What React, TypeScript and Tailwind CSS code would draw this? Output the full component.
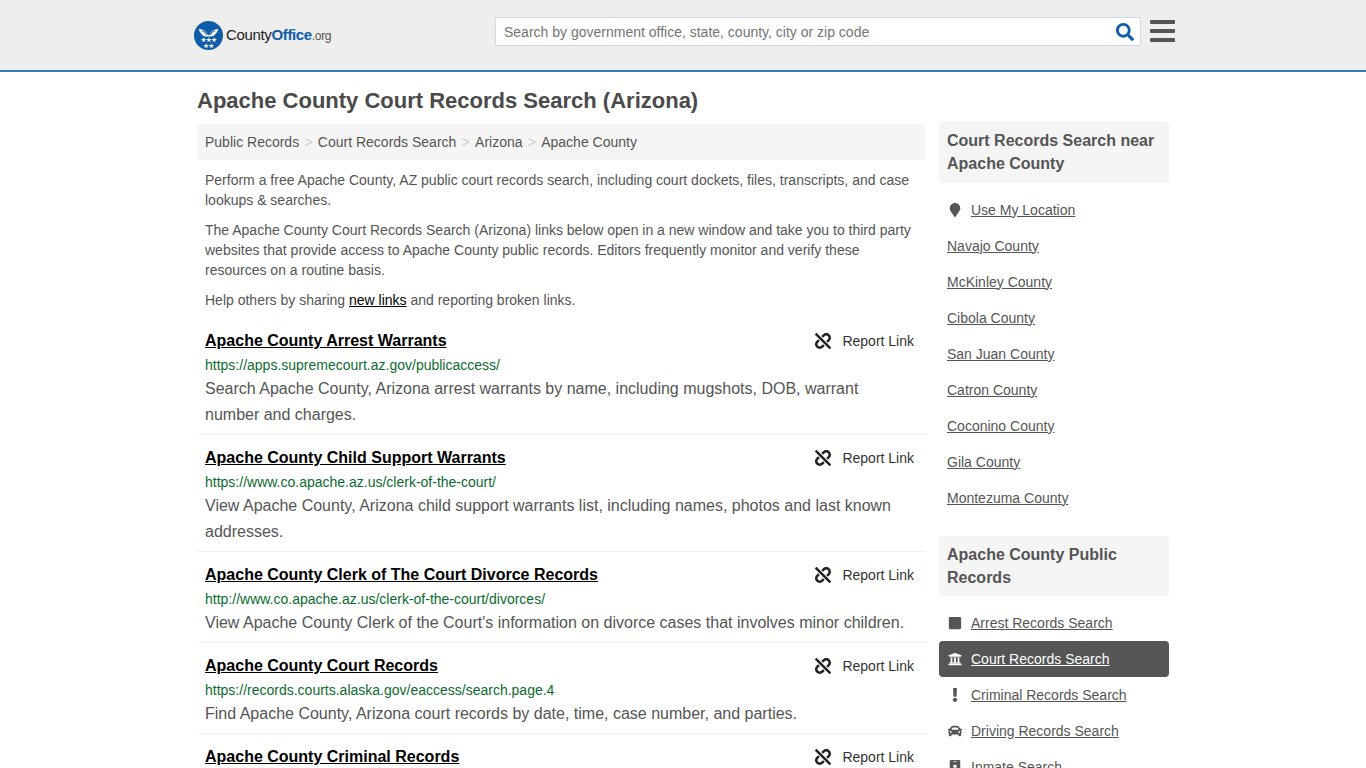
import React from "react";
import { FaUnlink, FaSearch, FaMapMarker, FaSquare, FaUniversity, FaExclamation, FaCar, FaIdBadge } from "react-icons/fa";

const results = [
  { t: "Apache County Arrest Warrants", u: "https://apps.supremecourt.az.gov/publicaccess/", d: "Search Apache County, Arizona arrest warrants by name, including mugshots, DOB, warrant number and charges." },
  { t: "Apache County Child Support Warrants", u: "https://www.co.apache.az.us/clerk-of-the-court/", d: "View Apache County, Arizona child support warrants list, including names, photos and last known addresses." },
  { t: "Apache County Clerk of The Court Divorce Records", u: "http://www.co.apache.az.us/clerk-of-the-court/divorces/", d: "View Apache County Clerk of the Court's information on divorce cases that involves minor children." },
  { t: "Apache County Court Records", u: "https://records.courts.alaska.gov/eaccess/search.page.4", d: "Find Apache County, Arizona court records by date, time, case number, and parties." },
  { t: "Apache County Criminal Records", u: "https://www.co.apache.az.us/", d: "Search Apache County, Arizona criminal records." },
];
const near = ["Navajo County", "McKinley County", "Cibola County", "San Juan County", "Catron County", "Coconino County", "Gila County", "Montezuma County"];

function Logo() {
  return (
    <svg width="29" height="29" viewBox="0 0 28 28" className="shrink-0">
      <circle cx="14" cy="14" r="14" fill="#0f5ca8" />
      <path d="M4.500 7.500c3 .2 6 1.500 8 4.500l1.500 2 1.500-2c2-3 5-4.300 8-4.500-.8 3.500-3 6.500-6.500 7.500h-6C7.500 14 5.300 11 4.500 7.500z" fill="#fff" />
      <path d="M7.500 9.500c2 .5 3.800 2 5 4M20.500 9.500c-2 .5-3.800 2-5 4" stroke="#0f5ca8" strokeWidth="0.9" fill="none" />
      <path d="M10 10.500c1 .5 2 1.500 2.600 2.800M18 10.500c-1 .5-2 1.500-2.600 2.800" stroke="#0f5ca8" strokeWidth="0.6" fill="none" />
      <g fill="#fff" fontFamily="DejaVu Sans" fontSize="6.500">
        <text x="6.300" y="20.500">★</text>
        <text x="11.300" y="20.500">★</text>
        <text x="16.300" y="20.500">★</text>
        <text x="8.800" y="26">★</text>
        <text x="13.800" y="26">★</text>
      </g>
    </svg>
  );
}

function Result({ r, last }: { r: (typeof results)[number]; last?: boolean }) {
  return (
    <div className={`px-2 pt-[10px] pb-[6px] ${last ? "" : "border-b border-[#eeeeee]"}`}>
      <div className="flex items-center justify-between h-[26px]">
        <a className="text-[16px] font-bold text-black underline leading-[26px]">{r.t}</a>
        <span className="flex items-center text-[14px] text-[#333] pr-[3px]">
          <FaUnlink className="text-[16px] text-[#222] mr-[11px]" />
          Report Link
        </span>
      </div>
      <div className="text-[14px] leading-[20px] text-[#0b6b2e] mt-[1px]">{r.u}</div>
      <p className="text-[16px] leading-[26px] text-[#555] mt-[1px]">{r.d}</p>
    </div>
  );
}

function Side({ icon, label, active }: { icon?: React.ReactNode; label: string; active?: boolean }) {
  return (
    <div className={`h-[36px] flex items-center text-[14px] rounded-[4px] px-2 ${active ? "bg-[#555] text-white" : "text-[#555]"}`}>
      {icon !== undefined && <span className={`w-[16px] mr-[8px] flex justify-center text-[14px] ${active ? "text-white" : "text-[#555]"}`}>{icon}</span>}
      <a className="underline">{label}</a>
    </div>
  );
}

export default function App() {
  return (
    <div className="h-[768px] overflow-hidden bg-white text-[#555] font-['Liberation_Sans',Arial,sans-serif]">
      <header className="h-[72px] bg-[#eeeeee] border-b-2 border-[#337ab7]">
        <div className="ml-[194px] flex items-start">
          <div className="flex items-center mt-[21px] w-[301px] shrink-0">
            <Logo />
            <span className="ml-[3px] text-[15px] tracking-[-0.35px] text-[#222]">County<span className="font-bold text-[#0f5ca8]">Office</span><span className="text-[12px] text-[#555]">.org</span></span>
          </div>
          <div className="mt-[17px] w-[646px] h-[29px] shrink-0 bg-white border border-[#ccd9e6] rounded-[2px] flex items-center justify-between pl-[8px] pr-[6px]">
            <span className="text-[14px] text-[#757575] pt-[1px]">Search by government office, state, county, city or zip code</span>
            <FaSearch className="text-[18px] text-[#0f5ca8] mt-[1px]" />
          </div>
          <div className="ml-[9px] mt-[20px] w-[25px] shrink-0 flex flex-col gap-[5px]">
            <div className="h-[4px] bg-[#555] rounded-[1px]" />
            <div className="h-[4px] bg-[#555] rounded-[1px]" />
            <div className="h-[4px] bg-[#555] rounded-[1px]" />
          </div>
        </div>
      </header>
      <div className="ml-[197px] w-[972px] flex gap-[14px]">
        <main className="w-[728px] shrink-0">
          <h1 className="text-[22px] font-bold text-[#4a4a4a] leading-[26px] mt-[16px]">Apache County Court Records Search (Arizona)</h1>
          <nav className="mt-[10px] h-[36px] bg-[#f5f5f5] rounded-[4px] px-2 flex items-center text-[14px] text-[#555]">
            <a>Public Records</a><span className="mx-[5.25px] text-[#ccc]">&gt;</span>
            <a>Court Records Search</a><span className="mx-[5.25px] text-[#ccc]">&gt;</span>
            <a>Arizona</a><span className="mx-[5.25px] text-[#ccc]">&gt;</span>
            <a>Apache County</a>
          </nav>
          <div className="px-2 pt-[10px] text-[14px] leading-[20px] text-[#555]">
            <p>Perform a free Apache County, AZ public court records search, including court dockets, files, transcripts, and case lookups &amp; searches.</p>
            <p className="mt-[10px]">The Apache County Court Records Search (Arizona) links below open in a new window and take you to third party websites that provide access to Apache County public records. Editors frequently monitor and verify these resources on a routine basis.</p>
            <p className="mt-[10px]">Help others by sharing <a className="text-black underline">new links</a> and reporting broken links.</p>
          </div>
          <div className="mt-[8px]">
            {results.map((r, i) => <Result key={r.t} r={r} last={i === results.length - 1} />)}
          </div>
        </main>
        <aside className="w-[230px] shrink-0 pt-[50px]">
          <div className="bg-[#f5f5f5] rounded-[4px] px-2 pt-[7px] pb-[8px] text-[16px] font-bold leading-[23px] text-[#555]">Court Records Search near Apache County</div>
          <div className="mt-[9px]">
            <Side icon={<FaMapMarker />} label="Use My Location" />
            {near.map((n) => <Side key={n} label={n} />)}
          </div>
          <div className="mt-[20px] bg-[#f5f5f5] rounded-[4px] px-2 py-[7px] text-[16px] font-bold leading-[23px] text-[#555]">Apache County Public Records</div>
          <div className="mt-[9px]">
            <Side icon={<FaSquare />} label="Arrest Records Search" />
            <Side icon={<FaUniversity />} label="Court Records Search" active />
            <Side icon={<FaExclamation />} label="Criminal Records Search" />
            <Side icon={<FaCar />} label="Driving Records Search" />
            <Side icon={<FaIdBadge />} label="Inmate Search" />
          </div>
        </aside>
      </div>
    </div>
  );
}
